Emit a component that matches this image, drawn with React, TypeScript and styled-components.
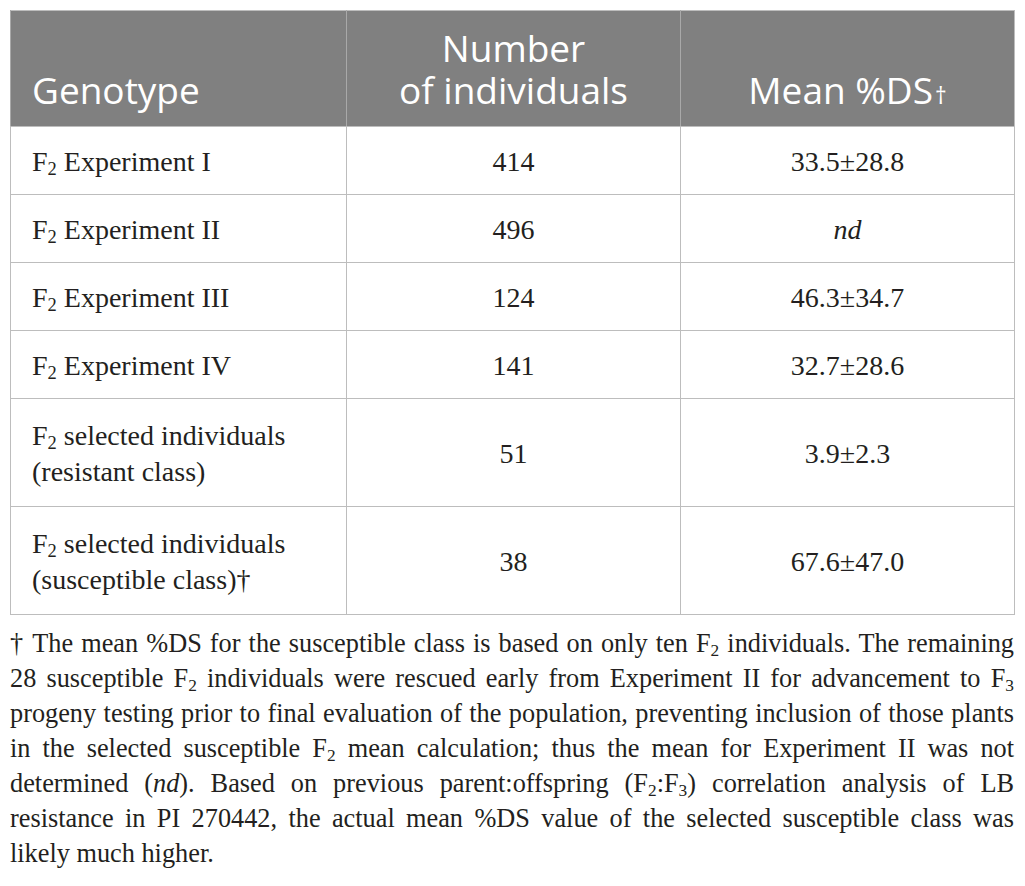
import React from "react";
import styled, { createGlobalStyle } from "styled-components";

const Global = createGlobalStyle`
  html, body { margin: 0; padding: 0; background: #ffffff; }
  body { width: 1025px; }
`;

const Page = styled.div`
  padding: 10px 10px 0 10px;
  width: 1005px;
  color: #231f20;
`;

const Table = styled.table`
  width: 1004px;
  border-collapse: collapse;
  table-layout: fixed;
  border: 1px solid #bdbdbd;
`;

const HeadCell = styled.th<{ $align?: string }>`
  background: #808080;
  color: #ffffff;
  font-family: "Open Sans", "Lato", sans-serif;
  font-weight: 400;
  font-size: 37px;
  line-height: 42px;
  text-align: ${(p) => p.$align || "left"};
  vertical-align: bottom;
  height: 116px;
  box-sizing: border-box;
  padding: 0 21px 15px 21px;
  border-left: 1px solid #a9a9a9;
  border-bottom: 1px solid #bdbdbd;
`;

const Dagger = styled.span`
  font-size: 0.62em;
  line-height: 0;
  margin-left: 2px;
`;

const Cell = styled.td<{ $align?: string; $tall?: boolean }>`
  font-family: "Liberation Serif", "Times New Roman", serif;
  font-size: 28px;
  line-height: 36px;
  color: #231f20;
  text-align: ${(p) => p.$align || "left"};
  vertical-align: middle;
  height: ${(p) => (p.$tall ? "108px" : "68px")};
  box-sizing: border-box;
  padding: 3px 21px 0 21px;
  border: 1px solid #bdbdbd;
`;

const Sub = styled.sub`
  font-size: 0.66em;
  vertical-align: -0.22em;
  line-height: 0;
`;

const Note = styled.div`
  margin-top: 11px;
  width: 1004px;
  font-family: "Liberation Serif", "Times New Roman", serif;
  font-size: 26.3px;
  line-height: 35px;
  color: #231f20;
`;

const NoteLine = styled.div<{ $last?: boolean }>`
  text-align: justify;
  text-align-last: ${(p) => (p.$last ? "left" : "justify")};
  white-space: nowrap;
`;

const F = ({ n }: { n: number }) => (
  <>
    F<Sub>{n}</Sub>
  </>
);

type Row = { g: React.ReactNode; n: string; m: React.ReactNode; tall?: boolean };

const rows: Row[] = [
  { g: <><F n={2} /> Experiment I</>, n: "414", m: "33.5±28.8" },
  { g: <><F n={2} /> Experiment II</>, n: "496", m: <i>nd</i> },
  { g: <><F n={2} /> Experiment III</>, n: "124", m: "46.3±34.7" },
  { g: <><F n={2} /> Experiment IV</>, n: "141", m: "32.7±28.6" },
  {
    g: <><F n={2} /> selected individuals<br />(resistant class)</>,
    n: "51",
    m: "3.9±2.3",
    tall: true,
  },
  {
    g: <><F n={2} /> selected individuals<br />(susceptible class)†</>,
    n: "38",
    m: "67.6±47.0",
    tall: true,
  },
];

export default function App() {
  return (
    <Page>
      <Global />
      <Table>
        <colgroup>
          <col style={{ width: 336 }} />
          <col style={{ width: 334 }} />
          <col style={{ width: 334 }} />
        </colgroup>
        <thead>
          <tr>
            <HeadCell>Genotype</HeadCell>
            <HeadCell $align="center">
              Number
              <br />
              of individuals
            </HeadCell>
            <HeadCell $align="center">
              Mean %DS<Dagger>†</Dagger>
            </HeadCell>
          </tr>
        </thead>
        <tbody>
          {rows.map((r, i) => (
            <tr key={i}>
              <Cell $tall={r.tall}>{r.g}</Cell>
              <Cell $align="center" $tall={r.tall}>{r.n}</Cell>
              <Cell $align="center" $tall={r.tall}>{r.m}</Cell>
            </tr>
          ))}
        </tbody>
      </Table>
      <Note>
        <NoteLine>† The mean %DS for the susceptible class is based on only ten <F n={2} /> individuals. The remaining</NoteLine>
        <NoteLine>28 susceptible <F n={2} /> individuals were rescued early from Experiment II for advancement to <F n={3} /></NoteLine>
        <NoteLine>progeny testing prior to final evaluation of the population, preventing inclusion of those plants</NoteLine>
        <NoteLine>in the selected susceptible <F n={2} /> mean calculation; thus the mean for Experiment II was not</NoteLine>
        <NoteLine>determined (<i>nd</i>). Based on previous parent:offspring (<F n={2} />:<F n={3} />) correlation analysis of LB</NoteLine>
        <NoteLine>resistance in PI 270442, the actual mean %DS value of the selected susceptible class was</NoteLine>
        <NoteLine $last>likely much higher.</NoteLine>
      </Note>
    </Page>
  );
}
